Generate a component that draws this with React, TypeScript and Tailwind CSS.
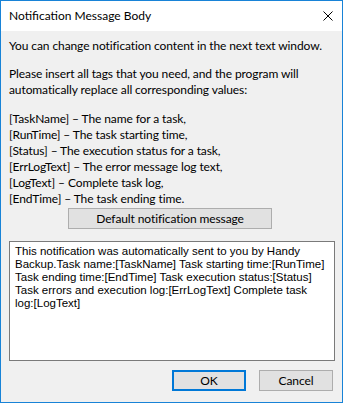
export default function App() {
  const tags = [
    '[TaskName] – The name for a task,',
    '[RunTime] – The task starting time,',
    '[Status] – The execution status for a task,',
    '[ErrLogText] – The error message log text,',
    '[LogText] – Complete task log,',
    '[EndTime] – The task ending time.',
  ]

  const body = [
    'This notification was automatically sent to you by Handy',
    'Backup.Task name:[TaskName] Task starting time:[RunTime]',
    'Task ending time:[EndTime] Task execution status:[Status]',
    'Task errors and execution log:[ErrLogText] Complete task',
    'log:[LogText]',
  ]

  return (
    <div
      className="w-[343px] h-[403px] border border-[#1883d7] bg-[#f0f0f0] flex flex-col text-black"
      style={{ fontFamily: '"Segoe UI", Lato, sans-serif' }}
    >
      {/* Title bar */}
      <div className="h-[30px] bg-white flex items-center justify-between pl-2 pr-[9px]">
        <span className="text-[12px] leading-[16px] -mt-[1px]">Notification Message Body</span>
        <svg width="10" height="10" viewBox="0 0 10 10" className="-mt-[1px]">
          <path d="M0.5 0.5 L9.5 9.5 M9.5 0.5 L0.5 9.5" stroke="#000" strokeWidth="1" />
        </svg>
      </div>

      {/* Content */}
      <div className="flex flex-col px-2 text-[12px] leading-[16px] tracking-[-0.1px]">
        <div className="mt-[7px] whitespace-nowrap">You can change notification content in the next text window.</div>

        <div className="mt-[12px] whitespace-nowrap">
          <div>Please insert all tags that you need, and the program will</div>
          <div>automatically replace all corresponding values:</div>
        </div>

        <div className="mt-[13px]">
          {tags.map((t) => (
            <div key={t}>{t}</div>
          ))}
        </div>

        <button className="mt-[1px] ml-[59px] w-[204px] h-[21px] border border-[#adadad] bg-[#e1e1e1] flex items-center justify-center text-[12px]">
          Default notification message
        </button>

        <div
          className="mt-[12px] w-[326px] h-[120px] border border-[#7a7a7a] bg-white pt-[3px] px-[5px] text-[11.5px] leading-[13px] tracking-normal whitespace-nowrap"
          style={{ fontFamily: '"Tahoma", "Liberation Sans", sans-serif' }}
        >
          {body.map((l) => (
            <div key={l}>{l}</div>
          ))}
        </div>

        <div className="mt-[9px] flex justify-end gap-[13px] pr-[1px]">
          <button className="w-[74px] h-[21px] border-2 border-[#0078d7] bg-[#e1e1e1] flex items-center justify-center text-[12px]">
            OK
          </button>
          <button className="w-[74px] h-[21px] border border-[#adadad] bg-[#e1e1e1] flex items-center justify-center text-[12px]">
            Cancel
          </button>
        </div>
      </div>
    </div>
  )
}
